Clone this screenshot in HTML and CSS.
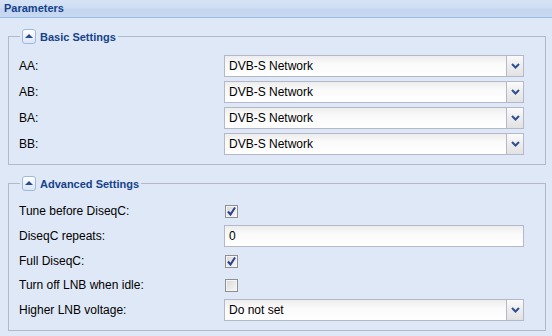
FILE: index.html
```html
<!DOCTYPE html>
<html lang="en">
<head>
    <meta charset="UTF-8">
    <title>Parameters</title>
    <link rel="stylesheet" href="styles.css">
</head>
<body>
    <div class="panel">
        <div class="panel-header">Parameters</div>

        <div class="panel-body">
            <!-- Basic settings -->
            <fieldset class="group">
                <legend><span class="toggle"></span>Basic Settings</legend>
                <div class="form-grid">
                    <label>AA:</label>
                    <div class="combo"><span class="combo-text">DVB-S Network</span><span class="trigger"><svg width="9" height="6" viewBox="0 0 9 6"><polyline points="1,1 4.5,4.5 8,1" fill="none" stroke="#2f4f8f" stroke-width="2"/></svg></span></div>

                    <label>AB:</label>
                    <div class="combo"><span class="combo-text">DVB-S Network</span><span class="trigger"><svg width="9" height="6" viewBox="0 0 9 6"><polyline points="1,1 4.5,4.5 8,1" fill="none" stroke="#2f4f8f" stroke-width="2"/></svg></span></div>

                    <label>BA:</label>
                    <div class="combo"><span class="combo-text">DVB-S Network</span><span class="trigger"><svg width="9" height="6" viewBox="0 0 9 6"><polyline points="1,1 4.5,4.5 8,1" fill="none" stroke="#2f4f8f" stroke-width="2"/></svg></span></div>

                    <label>BB:</label>
                    <div class="combo"><span class="combo-text">DVB-S Network</span><span class="trigger"><svg width="9" height="6" viewBox="0 0 9 6"><polyline points="1,1 4.5,4.5 8,1" fill="none" stroke="#2f4f8f" stroke-width="2"/></svg></span></div>
                </div>
            </fieldset>

            <!-- Advanced settings -->
            <fieldset class="group group-advanced">
                <legend><span class="toggle"></span>Advanced Settings</legend>
                <div class="form-grid">
                    <label>Tune before DiseqC:</label>
                    <div class="check-row"><span class="checkbox checked"><svg width="11" height="11" viewBox="0 0 11 11"><path d="M2 5.5 L4.5 8.5 L9 1.5" fill="none" stroke="#2b3f8e" stroke-width="2"/></svg></span></div>

                    <label>DiseqC repeats:</label>
                    <div class="text-field">0</div>

                    <label>Full DiseqC:</label>
                    <div class="check-row"><span class="checkbox checked"><svg width="11" height="11" viewBox="0 0 11 11"><path d="M2 5.5 L4.5 8.5 L9 1.5" fill="none" stroke="#2b3f8e" stroke-width="2"/></svg></span></div>

                    <label>Turn off LNB when idle:</label>
                    <div class="check-row"><span class="checkbox"></span></div>

                    <label>Higher LNB voltage:</label>
                    <div class="combo"><span class="combo-text">Do not set</span><span class="trigger"><svg width="9" height="6" viewBox="0 0 9 6"><polyline points="1,1 4.5,4.5 8,1" fill="none" stroke="#2f4f8f" stroke-width="2"/></svg></span></div>
                </div>
            </fieldset>
        </div>
    </div>
</body>
</html>
```

FILE: styles.css
```css
body {
    margin: 0;
    padding: 0;
    font-family: "Liberation Sans", Arial, sans-serif;
    font-size: 12px;
    color: #000;
    background-color: #dfe8f6;
}

.panel-header {
    height: 17px;
    line-height: 17px;
    padding: 0 4px;
    border-bottom: 1px solid #99bbe8;
    background: linear-gradient(to bottom, #d6e3f5 0%, #cfdef3 45%, #c4d6f0 55%, #c8d9f1 100%);
    color: #15428b;
    font-weight: bold;
    font-size: 11px;
}

.panel-body {
    padding: 11px 6px 0 8px;
    background-color: #dfe8f6;
}

.group {
    margin: 0 0 11px 0;
    padding: 11px 0 9px 10px;
    border: 1px solid #b5b8c8;
}

.group-advanced {
    padding-top: 10px;
}

.group legend {
    display: flex;
    align-items: center;
    height: 15px;
    margin-left: 1px;
    padding: 0 2px 0 2px;
    color: #15428b;
    font-weight: bold;
    font-size: 11px;
}

.toggle {
    position: relative;
    display: inline-block;
    width: 12px;
    height: 13px;
    margin-right: 4px;
    border: 1px solid #9fb9de;
    border-radius: 3px;
    background: linear-gradient(to bottom, #ffffff, #dbe5f4);
}

.toggle::after {
    content: "";
    position: absolute;
    left: 2px;
    top: 4px;
    border-left: 4px solid transparent;
    border-right: 4px solid transparent;
    border-bottom: 4px solid #2a4b8f;
}

.form-grid {
    display: grid;
    grid-template-columns: 205px 300px;
    row-gap: 4px;
    align-items: center;
}

.combo, .text-field {
    box-sizing: border-box;
    height: 22px;
    border: 1px solid #b5b8c8;
    background: linear-gradient(to bottom, #ededed 0%, #fafafa 40%, #ffffff 100%);
}

.combo {
    display: flex;
}

.combo-text, .text-field {
    line-height: 20px;
    padding-left: 4px;
}

.combo-text {
    flex: 1;
}

.trigger {
    display: flex;
    align-items: center;
    justify-content: center;
    width: 16px;
    border-left: 1px solid #b5b8c8;
    background: linear-gradient(to bottom, #fbfbfb 0%, #eeeeee 45%, #e2e2e2 100%);
}

.check-row {
    display: flex;
    align-items: center;
    height: 20px;
}

.checkbox {
    box-sizing: border-box;
    display: flex;
    align-items: center;
    justify-content: center;
    width: 13px;
    height: 13px;
    margin-left: 1px;
    border: 1px solid #8f8f8f;
    box-shadow: inset 0 0 0 1px #f4f4f4;
    background: linear-gradient(to bottom right, #d8d8d8, #f8f8f8);
}
```
